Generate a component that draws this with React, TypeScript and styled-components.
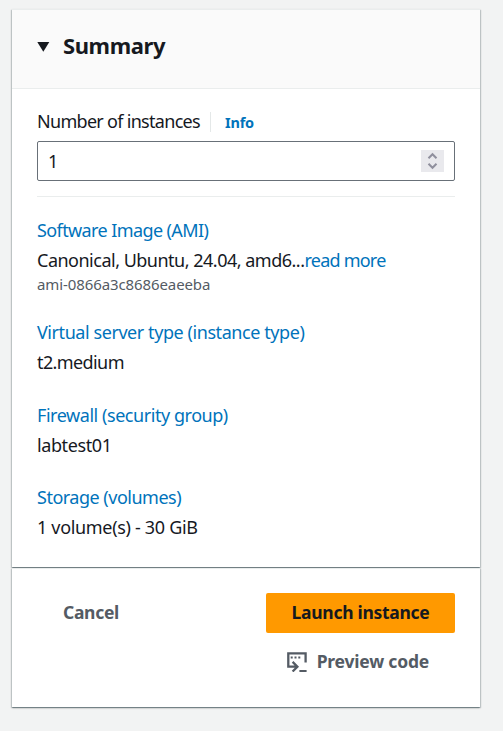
import React from "react";
import styled, { createGlobalStyle } from "styled-components";

const GlobalStyle = createGlobalStyle`
  * { box-sizing: border-box; }
  body {
    margin: 0;
    background: #f2f3f3;
    color: #16191f;
    font-family: "Noto Sans", "Open Sans", sans-serif;
  }
`;

const Panel = styled.main`
  display: flex;
  flex-direction: column;
  gap: 1px;
  width: 468px;
  padding-bottom: 10px;
  margin: 9px 0 0 12px;
`;

const Card = styled.section<{ $height: number }>`
  height: ${(p) => p.$height}px;
  background: #fff;
  border-top: 1px solid #eaeded;
  box-shadow: 0 1px 0 0 rgba(0, 28, 36, 0.2), 0 1px 2px 0 rgba(0, 28, 36, 0.25),
    1px 1px 1px 0 rgba(0, 28, 36, 0.15), -1px 1px 1px 0 rgba(0, 28, 36, 0.15);
`;

const Text = styled.span<{ $tracking?: number }>`
  letter-spacing: ${(p) => p.$tracking ?? 0}px;
  white-space: pre;
`;

const Header = styled.header`
  display: flex;
  align-items: center;
  height: 79px;
  padding: 0 25px 5px;
  gap: 13px;
  background: #fafafa;
  border-bottom: 1px solid #eaeded;
`;

const Title = styled.h2`
  margin: -4px 0 0;
  font-size: 22px;
  line-height: 28px;
  font-weight: 700;
`;

const Body = styled.div`
  padding: 17px 25px 0;
`;

const FieldLabel = styled.div`
  display: flex;
  align-items: baseline;
  height: 30px;
  font-size: 18px;
  line-height: 30px;
`;

const InfoLink = styled.a`
  position: relative;
  margin-left: 10px;
  padding-left: 15px;
  color: #0073bb;
  font-size: 14.5px;
  font-weight: 700;

  &::before {
    content: "";
    position: absolute;
    left: 0;
    top: 5px;
    width: 1px;
    height: 20px;
    background: #e4e8e8;
  }
`;

const NumberField = styled.div`
  display: flex;
  align-items: center;
  justify-content: space-between;
  height: 40px;
  margin-top: 5px;
  padding: 0 10px;
  border: 1px solid #687078;
  border-radius: 2px;
  font-size: 18px;
`;

const Stepper = styled.span`
  display: grid;
  place-items: center;
  width: 23px;
  height: 22px;
  background: #e9e9ed;
`;

const Divider = styled.hr`
  height: 1px;
  margin: 15px 0 18px;
  border: 0;
  background: #eaeded;
`;

const Detail = styled.div<{ $gap: number }>`
  display: flex;
  flex-direction: column;
  margin-bottom: ${(p) => p.$gap}px;
  font-size: 18px;
  line-height: 30px;
`;

const Link = styled(Text)`
  color: #0073bb;
`;

const Small = styled(Text)`
  color: #545b64;
  font-size: 15px;
  line-height: 19px;
  height: 20px;
`;

const Footer = styled.footer`
  display: grid;
  grid-template-columns: 1fr 189px;
  row-gap: 9px;
  padding: 24px 25px 0;
`;

const Button = styled.button<{ $primary?: boolean }>`
  display: flex;
  align-items: center;
  justify-content: center;
  justify-self: ${(p) => (p.$primary ? "stretch" : "start")};
  height: 40px;
  padding: 0 26px 2px;
  gap: 10px;
  border: 0;
  border-radius: 2px;
  background: ${(p) => (p.$primary ? "#ff9900" : "transparent")};
  color: ${(p) => (p.$primary ? "#16191f" : "#545b64")};
  font: 700 17.5px/24px "Noto Sans", "Open Sans", sans-serif;
`;

const PreviewButton = styled(Button)`
  grid-column: 2;
  justify-self: end;
`;

const Caret = () => (
  <svg width="13" height="10" viewBox="0 0 13 10">
    <path d="M.3 0h12L6.3 9.7z" fill="#16191f" />
  </svg>
);

const StepperIcon = () => (
  <svg width="23" height="22" viewBox="0 0 23 22" fill="none" stroke="#8f8f9d" strokeWidth="2">
    <path d="M7.5 8.2l4-4 4 4M7.5 13.8l4 4 4-4" />
  </svg>
);

const ScriptGlyph = styled.svg`
  margin-top: 2px;
`;

const ScriptIcon = () => (
  <ScriptGlyph width="20" height="20" viewBox="0 0 20 20" fill="none" stroke="#545b64" strokeWidth="2.3">
    <path d="M18.6 10.5V1.4H1.3v13.3h9M5.6 9.9l4.8 4.8-4.8 4.8" />
    <path d="M12.4 18.9h7.2M3.7 5.5h2M7.5 5.5h2M11.3 5.5h2" strokeWidth="2" />
  </ScriptGlyph>
);

export default function App() {
  return (
    <>
      <GlobalStyle />
      <Panel>
        <Card $height={558}>
          <Header>
            <Caret />
            <Title><Text $tracking={-0.4}>Summary</Text></Title>
          </Header>
          <Body>
            <FieldLabel>
              <Text $tracking={-0.7}>Number of instances</Text>
              <InfoLink><Text $tracking={-0.2}>Info</Text></InfoLink>
            </FieldLabel>
            <NumberField>
              1
              <Stepper><StepperIcon /></Stepper>
            </NumberField>
            <Divider />
            <Detail $gap={22}>
              <Link $tracking={-0.6}>Software Image (AMI)</Link>
              <div>
                <Text $tracking={-0.5}>Canonical, Ubuntu, 24.04, amd6...</Text>
                <Link $tracking={-0.78}>read more</Link>
              </div>
              <Small $tracking={-0.1}>ami-0866a3c8686eaeeba</Small>
            </Detail>
            <Detail $gap={23}>
              <Link $tracking={-0.43}>Virtual server type (instance type)</Link>
              <Text $tracking={-0.6}>t2.medium</Text>
            </Detail>
            <Detail $gap={22}>
              <Link $tracking={-0.45}>Firewall (security group)</Link>
              <Text $tracking={-0.4}>labtest01</Text>
            </Detail>
            <Detail $gap={0}>
              <Link $tracking={-0.5}>Storage (volumes)</Link>
              <Text $tracking={-0.32}>1 volume(s) - 30 GiB</Text>
            </Detail>
          </Body>
        </Card>
        <Card $height={139}>
          <Footer>
            <Button><Text $tracking={-0.3}>Cancel</Text></Button>
            <Button $primary><Text $tracking={-0.3}>Launch instance</Text></Button>
            <PreviewButton>
              <ScriptIcon />
              <Text $tracking={-0.2}>Preview code</Text>
            </PreviewButton>
          </Footer>
        </Card>
      </Panel>
    </>
  );
}
